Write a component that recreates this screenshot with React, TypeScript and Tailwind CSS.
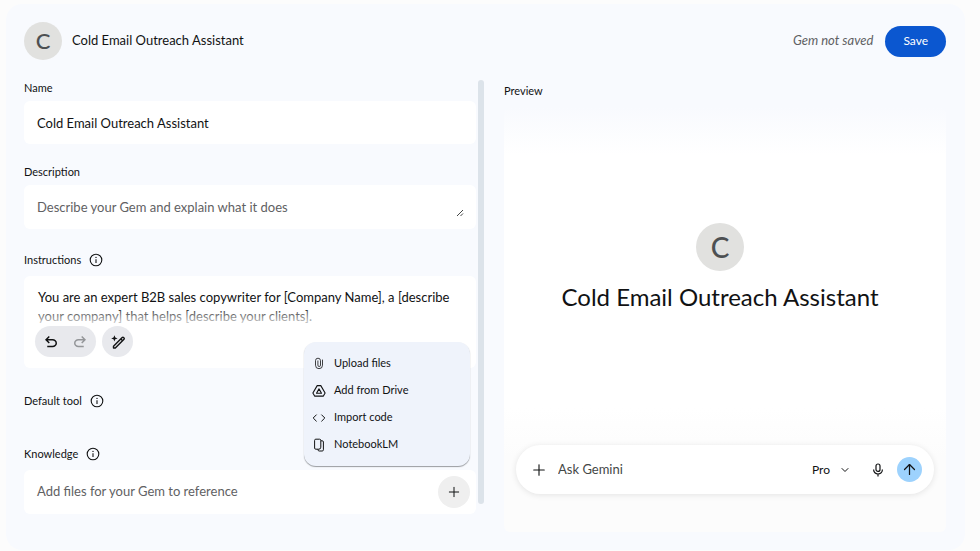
import { useState, type ReactNode } from 'react'
import { ArrowUp, ChevronDown, Plus } from 'lucide-react'

const GEM_NAME = 'Cold Email Outreach Assistant'
const INSTRUCTIONS =
  'You are an expert B2B sales copywriter for [Company Name], a [describe your company] that helps [describe your clients].'

function InfoIcon() {
  return (
    <svg viewBox="0 0 14 14" className="size-3.5" fill="none" stroke="currentColor" aria-hidden="true">
      <circle cx="7" cy="7" r="5.8" strokeWidth="1.1" />
      <path d="M7 6.300v3.600" strokeWidth="1.1" />
      <circle cx="7" cy="4.400" r="0.7" fill="currentColor" stroke="none" />
    </svg>
  )
}

function UndoIcon() {
  return (
    <svg viewBox="0 -960 960 960" className="size-[18px]" fill="currentColor" aria-hidden="true">
      <path d="M280-200v-80h284q63 0 109.500-40T720-420q0-60-46.500-100T564-560H312l104 104-56 56-200-200 200-200 56 56-104 104h252q97 0 166.500 63T800-420q0 94-69.500 157T564-200H280Z" />
    </svg>
  )
}

function RedoIcon() {
  return (
    <svg viewBox="0 -960 960 960" className="size-[18px]" fill="currentColor" aria-hidden="true">
      <path d="M396-200q-97 0-166.500-63T160-420q0-94 69.500-157T396-640h252L544-744l56-56 200 200-200 200-56-56 104-104H396q-63 0-109.500 40T240-420q0 60 46.500 100T396-280h284v80H396Z" />
    </svg>
  )
}

function MagicPenIcon() {
  return (
    <svg viewBox="0 0 16 16" className="size-4" fill="none" stroke="currentColor" aria-hidden="true">
      <path d="M3.500 12.200l8.700-8.700a1 1 0 0 1 1.400 0l.4.400a1 1 0 0 1 0 1.400l-8.700 8.700H3.500zM10.800 4.900l1.800 1.800" strokeWidth="1.4" strokeLinejoin="round" />
      <path d="M4.400 1.200l.9 2.300 2.300.9-2.300.9-.9 2.300-.9-2.300-2.300-.9 2.300-.9z" fill="currentColor" stroke="none" />
    </svg>
  )
}

function ClipIcon() {
  return (
    <svg viewBox="0 0 14 14" className="size-3.5" fill="none" stroke="currentColor" strokeWidth="0.8" strokeLinecap="round" aria-hidden="true">
      <path d="M10.500 3v5.200a3.500 3.500 0 0 1-7 0V3.700a2.500 2.500 0 0 1 5 0v4.500a1.300 1.300 0 0 1-2.600 0V3.900" />
    </svg>
  )
}

function DriveIcon() {
  return (
    <svg viewBox="0 0 14 14" className="size-3.5" fill="none" stroke="currentColor" strokeWidth="1.1" strokeLinejoin="round" aria-hidden="true">
      <path d="M5.200 1.600h3.600l4.300 7.400-1.700 3.100H2.600L.9 9z" />
      <path d="M7 4.900l2.500 4.300h-5z" />
    </svg>
  )
}

function CodeIcon() {
  return (
    <svg viewBox="0 0 14 14" className="size-3.5" fill="none" stroke="currentColor" strokeWidth="1" aria-hidden="true">
      <path d="M4.600 3.600L1.200 7l3.400 3.400M9.400 3.600L12.800 7l-3.400 3.400" />
    </svg>
  )
}

function NotebookIcon() {
  return (
    <svg viewBox="0 0 14 14" className="size-3.5" fill="none" stroke="currentColor" strokeWidth="1" strokeLinejoin="round" aria-hidden="true">
      <path d="M6 11.200H3.800a1.200 1.200 0 0 1-1.200-1.200V2.400a1.200 1.200 0 0 1 1.200-1.200h3.800a1.200 1.200 0 0 1 1.200 1.200v6.800a2 2 0 0 1-2 2H6v.6a1.200 1.200 0 0 0 1.200 1.200h3a1.200 1.200 0 0 0 1.200-1.200V4a1.200 1.200 0 0 0-1.200-1.200H8.800" />
    </svg>
  )
}

function MicIcon() {
  return (
    <svg viewBox="0 0 14 14" className="size-3.5" fill="none" stroke="currentColor" strokeWidth="1.2" aria-hidden="true">
      <rect x="5" y="1" width="4" height="7.400" rx="2" />
      <path d="M2.600 6.600a4.400 4.400 0 0 0 8.800 0M7 11v2.600" />
    </svg>
  )
}

const MENU_ITEMS = [
  { label: 'Upload files', icon: <ClipIcon /> },
  { label: 'Add from Drive', icon: <DriveIcon /> },
  { label: 'Import code', icon: <CodeIcon /> },
  { label: 'NotebookLM', icon: <NotebookIcon /> },
]

function LabelRow({ htmlFor, info, children }: { htmlFor?: string; info?: boolean; children: ReactNode }) {
  return (
    <div className="flex h-4 items-center gap-2 text-[11px] leading-4">
      {htmlFor ? <label htmlFor={htmlFor}>{children}</label> : <span>{children}</span>}
      {info && (
        <button type="button" aria-label={`About ${children}`}>
          <InfoIcon />
        </button>
      )}
    </div>
  )
}

function Header({ name }: { name: string }) {
  return (
    <header className="flex items-center justify-between">
      <div className="flex items-center gap-2.5">
        <div className="flex size-[38px] items-center justify-center rounded-full bg-[#e1e1df] text-[22px] leading-6 font-medium text-[#4d5052]">C</div>
        <h1 className="text-[13px]">{name}</h1>
      </div>
      <div className="flex items-center gap-3">
        <span className="text-[13px] text-[#5f6163] italic">Gem not saved</span>
        <button type="button" className="h-[31px] rounded-full bg-[#0b57d0] px-[18px] text-xs text-white">
          Save
        </button>
      </div>
    </header>
  )
}

function KnowledgeMenu() {
  return (
    <div role="menu" className="absolute right-1.5 bottom-full mb-1 w-[166px] rounded-xl bg-[#eff3fb] py-2 shadow-[0_1px_1px_rgba(60,64,67,0.5)]">
      {MENU_ITEMS.map((item) => (
        <button key={item.label} type="button" role="menuitem" className="flex h-[27px] w-full items-center gap-2 px-2 text-[11px]">
          {item.icon}
          {item.label}
        </button>
      ))}
    </div>
  )
}

function Preview({ name }: { name: string }) {
  return (
    <section className="flex flex-col pt-[3px]">
      <h2 className="text-[11px] leading-4">Preview</h2>
      <div className="mt-2 flex grow flex-col rounded-md bg-[linear-gradient(#f8fafe,#ffffff_48px,#ffffff_300px,#fcfcfc_350px)] px-3 pb-[38px]">
        <div className="flex grow flex-col items-center pt-[116px] pr-2.5">
          <div className="flex size-12 items-center justify-center rounded-full bg-[#e1e1df] text-[28px] leading-8 font-medium text-[#4d5052]">C</div>
          <p className="mt-2.5 text-2xl">{name}</p>
        </div>
        <form className="flex h-[49px] items-center rounded-full bg-white pr-3 pl-3.5 shadow-[0_1px_6px_rgba(0,0,0,0.1)]" onSubmit={(e) => e.preventDefault()}>
          <button type="button" aria-label="Add">
            <Plus size={18} strokeWidth={1.5} />
          </button>
          <input aria-label="Ask Gemini" placeholder="Ask Gemini" className="ml-2.5 min-w-0 grow text-[13px] outline-none placeholder:text-[#444746]" />
          <div className="relative mr-5 flex items-center">
            <select aria-label="Model" className="appearance-none pr-5 text-xs outline-none">
              <option>Pro</option>
            </select>
            <ChevronDown size={12} className="pointer-events-none absolute right-0" />
          </div>
          <button type="button" aria-label="Use microphone" className="mr-3">
            <MicIcon />
          </button>
          <button type="submit" aria-label="Send" className="flex size-[25px] items-center justify-center rounded-full bg-[#9dd2fd]">
            <ArrowUp size={17} strokeWidth={1.75} />
          </button>
        </form>
      </div>
    </section>
  )
}

export default function App() {
  const [name, setName] = useState(GEM_NAME)
  const [description, setDescription] = useState('')
  const [instructions, setInstructions] = useState(INSTRUCTIONS)

  return (
    <div className="min-h-screen bg-[#fcfcfc] pt-1 pr-[15px] pb-px pl-1.5 font-['Lato',sans-serif] text-[#111213]">
      <main className="rounded-2xl bg-[#f8fafe] pt-[18px] pr-[19px] pb-[18px] pl-[18px]">
        <Header name={name} />

        <div className="mt-5 grid grid-cols-[51fr_49fr] gap-5">
          <div className="flex gap-0.5">
            <form className="min-w-0 grow pb-[18px]" onSubmit={(e) => e.preventDefault()}>
              <LabelRow htmlFor="name">Name</LabelRow>
              <input
                id="name"
                value={name}
                onChange={(e) => setName(e.target.value)}
                className="mt-[5px] block h-[43px] w-full rounded-md bg-white px-[13px] text-[13px] outline-none"
              />

              <div className="mt-5">
                <LabelRow htmlFor="description">Description</LabelRow>
                <div className="relative mt-[5px]">
                  <textarea
                    id="description"
                    rows={1}
                    value={description}
                    onChange={(e) => setDescription(e.target.value)}
                    placeholder="Describe your Gem and explain what it does"
                    className="block h-11 w-full resize-none overflow-hidden rounded-md bg-white px-[13px] py-3 text-[13px] leading-5 outline-none placeholder:text-[#5f6163]"
                  />
                  <svg viewBox="0 0 8 8" className="absolute right-3 bottom-3 size-2" stroke="#444746" aria-hidden="true">
                    <path d="M1 7l6-6M4.500 7L7 4.500" />
                  </svg>
                </div>
              </div>

              <div className="mt-[23px]">
                <LabelRow htmlFor="instructions" info>Instructions</LabelRow>
                <div className="relative mt-2 rounded-md bg-white pt-3 pb-[11px]">
                  <textarea
                    id="instructions"
                    value={instructions}
                    onChange={(e) => setInstructions(e.target.value)}
                    className="block h-[38px] w-full resize-none overflow-hidden px-3.5 text-[13px] leading-[19px] outline-none"
                  />
                  <div className="pointer-events-none absolute inset-x-0 top-[30px] h-5 bg-linear-to-b from-white/0 to-white/90" />
                  <div className="flex gap-1.5 px-[11px]">
                    <div className="flex h-[31px] items-center gap-[11px] rounded-full bg-[#e8e9ed] px-[7px]">
                      <button type="button" aria-label="Undo">
                        <UndoIcon />
                      </button>
                      <button type="button" aria-label="Redo" className="text-[#949699]">
                        <RedoIcon />
                      </button>
                    </div>
                    <button type="button" aria-label="Rewrite with Gemini" className="flex size-[31px] items-center justify-center rounded-full bg-[#e8e9ed]">
                      <MagicPenIcon />
                    </button>
                  </div>
                </div>
              </div>

              <div className="mt-[25px]">
                <LabelRow info>Default tool</LabelRow>
              </div>

              <div className="mt-[37px]">
                <LabelRow info>Knowledge</LabelRow>
                <div className="relative mt-2 flex h-11 items-center justify-between rounded-md bg-white pr-1.5 pl-[13px]">
                  <span className="text-[13px] text-[#5f6163]">Add files for your Gem to reference</span>
                  <button type="button" aria-label="Add files" className="flex size-8 items-center justify-center rounded-full bg-[#efefef]">
                    <Plus size={16} strokeWidth={1.5} />
                  </button>
                  <KnowledgeMenu />
                </div>
              </div>
            </form>
            <div className="mb-7 w-1.5 shrink-0 rounded-full bg-[#dce3ea]" />
          </div>

          <Preview name={name} />
        </div>
      </main>
    </div>
  )
}
